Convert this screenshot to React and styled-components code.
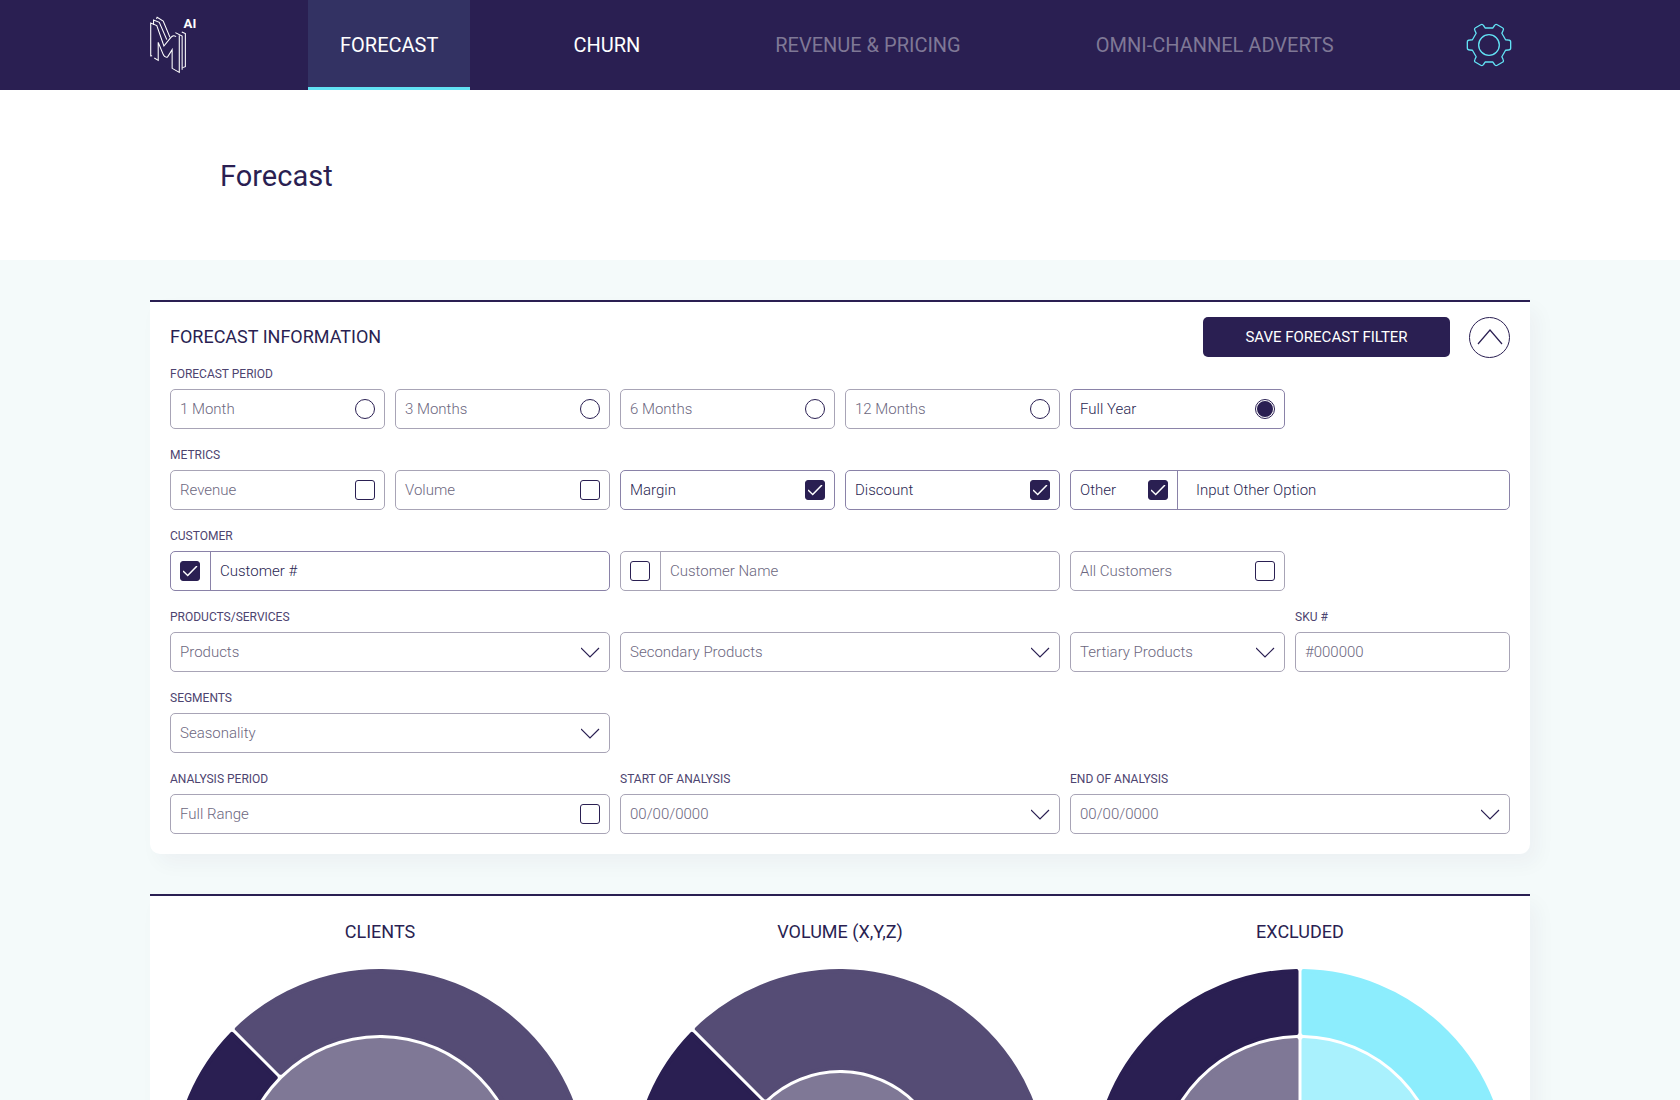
import React, { useState } from "react";
import styled, { createGlobalStyle, css } from "styled-components";

const ink = "#2a1f52";
const muted = "#7f7896";
const fieldText = "#6c6780";
const line = "#a8a4b6";
const lineActive = "#8a82a8";
const cyan = "#62e2f4";

const GlobalStyle = createGlobalStyle`
  *, *::before, *::after { box-sizing: border-box; }
  body {
    margin: 0;
    background: #f4fafa;
    color: ${ink};
    font-family: Roboto, "Liberation Sans", sans-serif;
    font-weight: 300;
  }
  button, input, select { font: inherit; color: inherit; }
`;

const Header = styled.header`
  background: ${ink};
  height: 90px;
  padding: 0 168px 0 150px;
  display: flex;
  align-items: center;
`;

const Logo = styled.a`
  width: 158px;
  height: 60px;
  color: #fff;
  svg { display: block; }
`;

const Nav = styled.nav`
  display: flex;
  align-self: stretch;
  gap: 71px;
  margin-right: auto;
`;

const Tab = styled.a`
  display: flex;
  align-items: center;
  padding: 3px 32px 0;
  font-size: 20px;
  font-weight: 400;
  line-height: 24px;
  text-decoration: none;
  white-space: nowrap;
  color: ${(p) => (p.$disabled ? muted : "#fff")};
  border-bottom: 3px solid ${(p) => (p.$active ? cyan : "transparent")};
  background: ${(p) => (p.$active ? "#333263" : "transparent")};
`;

const GearButton = styled.button`
  border: 0;
  padding: 0;
  background: none;
  width: 46px;
  height: 46px;
  cursor: pointer;
  svg { display: block; }
`;

const TitleBand = styled.div`
  background: #fff;
  height: 170px;
  padding: 2px 220px 0;
  display: flex;
  align-items: center;
`;

const PageTitle = styled.h1`
  margin: 0;
  font-size: 29px;
  font-weight: 400;
  line-height: 32px;
`;

const Main = styled.main`
  padding: 40px 150px;
  display: flex;
  flex-direction: column;
  gap: 40px;
`;

const Card = styled.section`
  background: #fff;
  border-top: 2px solid ${ink};
  border-radius: 0 0 10px 10px;
  box-shadow: 8px 10px 20px rgba(42, 31, 82, 0.04);
  padding: ${(p) => p.$padding};
`;

const CardHead = styled.div`
  display: flex;
  align-items: center;
  gap: 19px;
  height: 42px;
  margin-bottom: 6px;
`;

const CardTitle = styled.h2`
  margin: 0;
  flex: ${(p) => (p.$grow ? 1 : "none")};
  font-size: 18px;
  font-weight: 400;
  line-height: 24px;
  text-align: ${(p) => (p.$center ? "center" : "left")};
`;

const SaveButton = styled.button`
  width: 247px;
  height: 40px;
  border: 0;
  border-radius: 5px;
  background: ${ink};
  color: #fff;
  font-size: 15px;
  font-weight: 400;
  cursor: pointer;
`;

const CollapseButton = styled.button`
  width: 41px;
  height: 41px;
  padding: 0;
  border: 1px solid ${ink};
  border-radius: 50%;
  background: none;
  display: grid;
  place-items: center;
  cursor: pointer;
`;

const Rows = styled.div`
  display: flex;
  flex-direction: column;
  gap: 16px;
`;

const Row = styled.fieldset`
  margin: 0;
  padding: 0;
  border: 0;
  min-width: 0;
  display: grid;
  grid-template-columns: repeat(6, minmax(0, 1fr));
  column-gap: 10px;
  align-items: end;
`;

const Cell = styled.div`
  grid-column: span ${(p) => p.$span || 1};
  display: flex;
  flex-direction: column;
  gap: 5px;
`;

const labelText = css`
  height: 20px;
  font-size: 12px;
  font-weight: 400;
  line-height: 20px;
  color: #4d4470;
  white-space: nowrap;
`;
const Caption = styled.span`${labelText}`;
const CaptionLabel = styled.label`${labelText}`;

const frame = css`
  height: 40px;
  border: 1px solid ${(p) => (p.$active ? lineActive : line)};
  border-radius: 5px;
  color: ${(p) => (p.$active ? ink : fieldText)};
  font-size: 15px;
`;

const Choice = styled.label`
  ${frame}
  display: flex;
  align-items: center;
  justify-content: space-between;
  padding: 0 9px;
  cursor: pointer;
`;

const Combo = styled.div`
  ${frame}
  display: flex;
`;

const ComboTick = styled.label`
  flex: none;
  display: flex;
  align-items: center;
  justify-content: space-between;
  width: ${(p) => (p.$wide ? 107 : 40)}px;
  padding: 0 9px;
  border-right: 1px solid ${(p) => (p.$active ? lineActive : line)};
`;

const ComboInput = styled.input`
  flex: 1;
  min-width: 0;
  border: 0;
  border-radius: 5px;
  background: none;
  padding: 0 ${(p) => (p.$wide ? 18 : 9)}px;
  &::placeholder { color: inherit; opacity: 1; }
`;

const TextInput = styled.input`
  ${frame}
  width: 100%;
  background: none;
  padding: 0 9px;
  &::placeholder { color: inherit; opacity: 1; }
`;

const Tick = styled.input`
  appearance: none;
  flex: none;
  margin: 0;
  width: 20px;
  height: 20px;
  border: 1px solid ${ink};
  border-radius: 3px;
  display: grid;
  place-items: center;
  &:checked { background: ${ink}; }
  &:checked::before {
    content: "";
    width: 15px;
    height: 11px;
    background: #fff;
    clip-path: polygon(0 55%, 7% 45%, 34% 81%, 93% 0, 100% 8%, 35% 100%);
  }
`;

const Radio = styled.input`
  appearance: none;
  flex: none;
  margin: 0;
  width: 20px;
  height: 20px;
  border: 1px solid ${ink};
  border-radius: 50%;
  display: grid;
  place-items: center;
  &:checked::before {
    content: "";
    width: 16px;
    height: 16px;
    border-radius: 50%;
    background: ${ink};
  }
`;

const SelectBox = styled.div`
  display: grid;
  align-items: center;
  > * { grid-area: 1 / 1; }
  svg {
    justify-self: end;
    margin-right: 9px;
    pointer-events: none;
  }
`;

const SelectField = styled.select`
  ${frame}
  appearance: none;
  width: 100%;
  background: none;
  padding: 0 40px 0 9px;
`;

const Charts = styled.div`
  display: grid;
  grid-template-columns: repeat(3, minmax(0, 1fr));
`;

const Chart = styled.figure`
  margin: 0;
  display: flex;
  flex-direction: column;
  align-items: center;
  gap: 25px;
`;

function LogoMark() {
  return (
    <svg width="50" height="60" viewBox="28 42 140 168" fill="none" stroke="#fff" strokeWidth="3">
      <g transform="scale(1 0.933)">
        <path d="M34 167 L30 168 V69 L47 77 L67 138 L86 113 Q92 104 101 110" />
        <path d="M38 74 V60 L54 67 L75 119" />
        <path d="M46 56 L48 52 L65 63 L84 112" />
        <path d="M40 174 L51 181 V127 L64 161 Q69 174 77 171 L90 149 V205 L110 217 V106" />
        <path d="M99 98 L118 108 V209" />
        <path d="M117 96 L127 101 V200 L119 203" />
      </g>
      <text x="122" y="77" fill="#fff" stroke="none" fontSize="37" fontWeight="700">AI</text>
    </svg>
  );
}

function Gear() {
  const local = [[49.7, -15.8], [58, -15], [65, -15], [65, -9], [65, 9], [65, 15], [58, 15], [49.7, 15.8]];
  let d = "";
  for (let k = 0; k < 6; k += 1) {
    const a = (k * Math.PI) / 3;
    const p = local.map(([x, y]) =>
      `${(x * Math.cos(a) - y * Math.sin(a)).toFixed(2)} ${(x * Math.sin(a) + y * Math.cos(a)).toFixed(2)}`);
    d += `${k ? "L" : "M"}${p[0]} L${p[1]} Q${p[2]} ${p[3]} L${p[4]} Q${p[5]} ${p[6]} L${p[7]} `;
  }
  return (
    <svg width="46" height="46" viewBox="-69 -69 138 138" fill="none" stroke={cyan} strokeWidth="4" strokeLinejoin="round">
      <path d={`${d}Z`} />
      <circle r="31" />
    </svg>
  );
}

const Chevron = ({ up }) => (
  <svg width={up ? 26 : 20} height={up ? 16 : 11} viewBox={up ? "0 0 26 16" : "0 0 20 11"} fill="none" stroke={ink} strokeWidth="1.2" aria-hidden="true">
    <path d={up ? "M1 15 L13 1 L25 15" : "M0 1 L9 10 L18 1"} />
  </svg>
);

const GAP = 1.5;
const ROUND = 2;

function wedge(inner, outer, from, to) {
  const R = outer - ROUND;
  const r = inner + ROUND;
  const off = GAP + ROUND;
  const pt = (radius, angle) =>
    `${(radius * Math.sin(angle)).toFixed(2)} ${(-radius * Math.cos(angle)).toFixed(2)}`;
  const a = (from * Math.PI) / 180;
  const b = (to * Math.PI) / 180;
  const large = to - from > 180 ? 1 : 0;
  const dR = Math.asin(off / R);
  if (inner === 0) {
    const tip = off / Math.sin(Math.min((b - a) / 2, Math.PI / 2));
    return `M${pt(R, a + dR)} A${R} ${R} 0 ${large} 1 ${pt(R, b - dR)} L${pt(tip, (a + b) / 2)} Z`;
  }
  const dr = Math.asin(off / r);
  return `M${pt(R, a + dR)} A${R} ${R} 0 ${large} 1 ${pt(R, b - dR)} L${pt(r, b - dr)} A${r} ${r} 0 ${large} 0 ${pt(r, a + dr)} Z`;
}

const Pie = ({ label, slices, core }) => (
  <svg width="416" height="416" viewBox="-208 -208 416 416" role="img" aria-label={label}>
    {core && <circle r={core} fill={muted} />}
    {slices.map(([inner, outer, from, to, fill]) => (
      <path
        key={`${inner}-${from}`}
        d={wedge(inner, outer, from, to)}
        fill={fill}
        stroke={fill}
        strokeWidth={ROUND * 2}
        strokeLinejoin="round"
      />
    ))}
  </svg>
);

const charts = [
  { title: "CLIENTS", core: 139, slices: [[142, 208, -45, 225, "#554c75"], [142, 208, 225, 315, ink]] },
  { title: "VOLUME (X,Y,Z)", core: 104, slices: [[107, 208, -45, 225, "#554c75"], [107, 208, 225, 315, ink]] },
  {
    title: "EXCLUDED",
    slices: [
      [142, 208, 0, 180, "#8cedfd"],
      [142, 208, 180, 360, ink],
      [0, 139, 0, 180, "#a9f1fd"],
      [0, 139, 180, 360, muted],
    ],
  },
];

const periods = ["1 Month", "3 Months", "6 Months", "12 Months", "Full Year"];

function TickChoice({ name, on, toggle }) {
  return (
    <Choice $active={on}>
      {name}
      <Tick type="checkbox" checked={on} onChange={toggle} />
    </Choice>
  );
}

function Dropdown({ text, ...rest }) {
  return (
    <SelectBox>
      <SelectField aria-label={text} {...rest}>
        <option>{text}</option>
      </SelectField>
      <Chevron />
    </SelectBox>
  );
}

export default function App() {
  const [period, setPeriod] = useState("Full Year");
  const [ticks, setTicks] = useState({ Margin: true, Discount: true, Other: true, "Customer #": true });
  const bind = (name) => ({
    name,
    on: !!ticks[name],
    toggle: () => setTicks((t) => ({ ...t, [name]: !t[name] })),
  });
  const other = bind("Other");

  return (
    <>
      <GlobalStyle />
      <Header>
        <Logo href="#" aria-label="M AI home"><LogoMark /></Logo>
        <Nav>
          <Tab href="#forecast" $active>FORECAST</Tab>
          <Tab href="#churn">CHURN</Tab>
          <Tab href="#revenue" $disabled>REVENUE &amp; PRICING</Tab>
          <Tab href="#adverts" $disabled>OMNI-CHANNEL ADVERTS</Tab>
        </Nav>
        <GearButton aria-label="Settings"><Gear /></GearButton>
      </Header>
      <TitleBand>
        <PageTitle>Forecast</PageTitle>
      </TitleBand>
      <Main>
        <Card $padding="14px 20px 20px">
          <CardHead>
            <CardTitle $grow>FORECAST INFORMATION</CardTitle>
            <SaveButton>SAVE FORECAST FILTER</SaveButton>
            <CollapseButton aria-label="Collapse"><Chevron up /></CollapseButton>
          </CardHead>
          <Rows>
            <Row aria-label="Forecast period">
              {periods.map((name, i) => (
                <Cell key={name}>
                  {i === 0 && <Caption>FORECAST PERIOD</Caption>}
                  <Choice $active={period === name}>
                    {name}
                    <Radio type="radio" name="period" checked={period === name} onChange={() => setPeriod(name)} />
                  </Choice>
                </Cell>
              ))}
            </Row>
            <Row aria-label="Metrics">
              <Cell>
                <Caption>METRICS</Caption>
                <TickChoice {...bind("Revenue")} />
              </Cell>
              <Cell><TickChoice {...bind("Volume")} /></Cell>
              <Cell><TickChoice {...bind("Margin")} /></Cell>
              <Cell><TickChoice {...bind("Discount")} /></Cell>
              <Cell $span={2}>
                <Combo $active={other.on}>
                  <ComboTick $wide $active={other.on}>
                    Other
                    <Tick type="checkbox" checked={other.on} onChange={other.toggle} />
                  </ComboTick>
                  <ComboInput $wide aria-label="Other option" placeholder="Input Other Option" />
                </Combo>
              </Cell>
            </Row>
            <Row aria-label="Customer">
              {["Customer #", "Customer Name"].map((name, i) => {
                const b = bind(name);
                return (
                  <Cell $span={2} key={name}>
                    {i === 0 && <Caption>CUSTOMER</Caption>}
                    <Combo $active={b.on}>
                      <ComboTick $active={b.on}>
                        <Tick type="checkbox" aria-label={`Use ${name}`} checked={b.on} onChange={b.toggle} />
                      </ComboTick>
                      <ComboInput aria-label={name} placeholder={name} />
                    </Combo>
                  </Cell>
                );
              })}
              <Cell><TickChoice {...bind("All Customers")} /></Cell>
            </Row>
            <Row aria-label="Products and services">
              <Cell $span={2}>
                <CaptionLabel htmlFor="products">PRODUCTS/SERVICES</CaptionLabel>
                <Dropdown id="products" text="Products" />
              </Cell>
              <Cell $span={2}><Dropdown text="Secondary Products" /></Cell>
              <Cell><Dropdown text="Tertiary Products" /></Cell>
              <Cell>
                <CaptionLabel htmlFor="sku">SKU #</CaptionLabel>
                <TextInput id="sku" placeholder="#000000" />
              </Cell>
            </Row>
            <Row aria-label="Segments">
              <Cell $span={2}>
                <CaptionLabel htmlFor="segments">SEGMENTS</CaptionLabel>
                <Dropdown id="segments" text="Seasonality" />
              </Cell>
            </Row>
            <Row aria-label="Analysis period">
              <Cell $span={2}>
                <Caption>ANALYSIS PERIOD</Caption>
                <TickChoice {...bind("Full Range")} />
              </Cell>
              <Cell $span={2}>
                <CaptionLabel htmlFor="start">START OF ANALYSIS</CaptionLabel>
                <Dropdown id="start" text="00/00/0000" />
              </Cell>
              <Cell $span={2}>
                <CaptionLabel htmlFor="end">END OF ANALYSIS</CaptionLabel>
                <Dropdown id="end" text="00/00/0000" />
              </Cell>
            </Row>
          </Rows>
        </Card>
        <Card $padding="24px 0 40px">
          <Charts>
            {charts.map(({ title, ...pie }) => (
              <Chart key={title}>
                <CardTitle as="figcaption" $center>{title}</CardTitle>
                <Pie label={title} {...pie} />
              </Chart>
            ))}
          </Charts>
        </Card>
      </Main>
    </>
  );
}
